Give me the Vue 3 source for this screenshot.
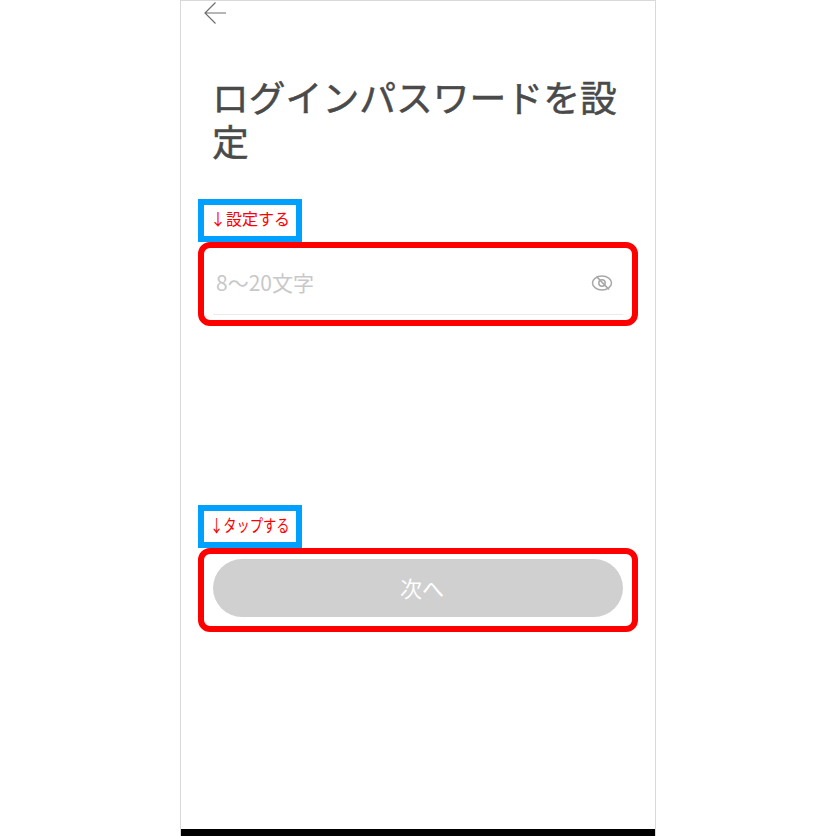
<script setup>
const boxes = [
  { label: '↓設定する', labelClass: 'note--set', boxClass: 'mark--input' },
  { label: '↓タップする', labelClass: 'note--tap', boxClass: 'mark--button' }
]
</script>

<template>
  <div class="page">
    <div class="phone">
      <header class="top">
        <svg class="back" width="24" height="24" viewBox="0 0 24 24" fill="none" stroke="#6f6f6f" stroke-width="1.2">
          <path d="M23 12H2M12.5 1.5 2 12l10.5 10.5" />
        </svg>
      </header>
      <h1 class="title">ログインパスワードを設定</h1>
      <div class="field">
        <span class="placeholder">8〜20文字</span>
        <svg class="eye" width="22" height="18" viewBox="0 0 22 18" fill="none" stroke="#a8a8a8" stroke-width="1.5">
          <ellipse cx="11" cy="9" rx="9.5" ry="7" />
          <circle cx="11" cy="9" r="3.2" />
          <path d="M5.500 2.500 18 15.500" stroke-width="1.800" />
        </svg>
      </div>
      <button class="next" type="button">次へ</button>
      <div class="bottom-bar"></div>

      <template v-for="box in boxes" :key="box.label">
        <div :class="['note', box.labelClass]"><span>{{ box.label }}</span></div>
        <div :class="['mark', box.boxClass]"></div>
      </template>
    </div>
  </div>
</template>

<style>
html,
body {
  margin: 0;
  background: #fff;
}
</style>

<style scoped>
.page {
  display: flex;
  justify-content: center;
  height: 836px;
  overflow: hidden;
  background: #fff;
  font-family: "Noto Sans CJK JP", "Noto Sans", sans-serif;
}

.phone {
  position: relative;
  box-sizing: border-box;
  display: flex;
  flex-direction: column;
  width: 476px;
  height: 836px;
  padding: 0 32px;
  border: 1px solid #d9d9d9;
  border-bottom: 0;
}

.top {
  height: 24px;
  margin-left: -10px;
}

.back {
  display: block;
}

.title {
  margin: 49px 0 0 -1px;
  font-size: 36.8px;
  line-height: 44px;
  font-weight: 400;
  -webkit-text-stroke: 0.5px #4a4a4a;
  color: #4a4a4a;
}

.field {
  display: flex;
  align-items: center;
  justify-content: space-between;
  height: 65px;
  margin-top: 87px;
  padding: 0 10px 0 3px;
  border-bottom: 1px solid #ececec;
}

.placeholder {
  font-size: 21px;
  color: #c8c8c8;
}

.eye {
  margin-top: 3px;
}

.next {
  height: 58px;
  margin-top: 244px;
  padding: 0 0 3px 8px;
  border: 0;
  border-radius: 29px;
  background: #d0d0d0;
  color: #fff;
  font: inherit;
  font-size: 22px;
}

.bottom-bar {
  position: absolute;
  left: 0;
  right: 0;
  bottom: 0;
  height: 7px;
  background: #000;
}

.note {
  position: absolute;
  box-sizing: border-box;
  left: 17px;
  width: 104px;
  height: 43px;
  padding-left: 6px;
  border: 6px solid #00a0ff;
  background: #fff;
  color: #f00;
  font-size: 16px;
  line-height: 28px;
  white-space: nowrap;
}

.note span {
  display: inline-block;
  transform-origin: left center;
}

.note--set {
  top: 198px;
  line-height: 26px;
}

.note--tap {
  top: 504px;
}

.note--tap span {
  font-size: 17px;
  transform: scaleX(0.78);
}

.mark {
  position: absolute;
  box-sizing: border-box;
  left: 17px;
  width: 440px;
  height: 84px;
  border: 6px solid #f00;
  border-radius: 12px;
}

.mark--input {
  top: 241px;
}

.mark--button {
  top: 547px;
}
</style>
